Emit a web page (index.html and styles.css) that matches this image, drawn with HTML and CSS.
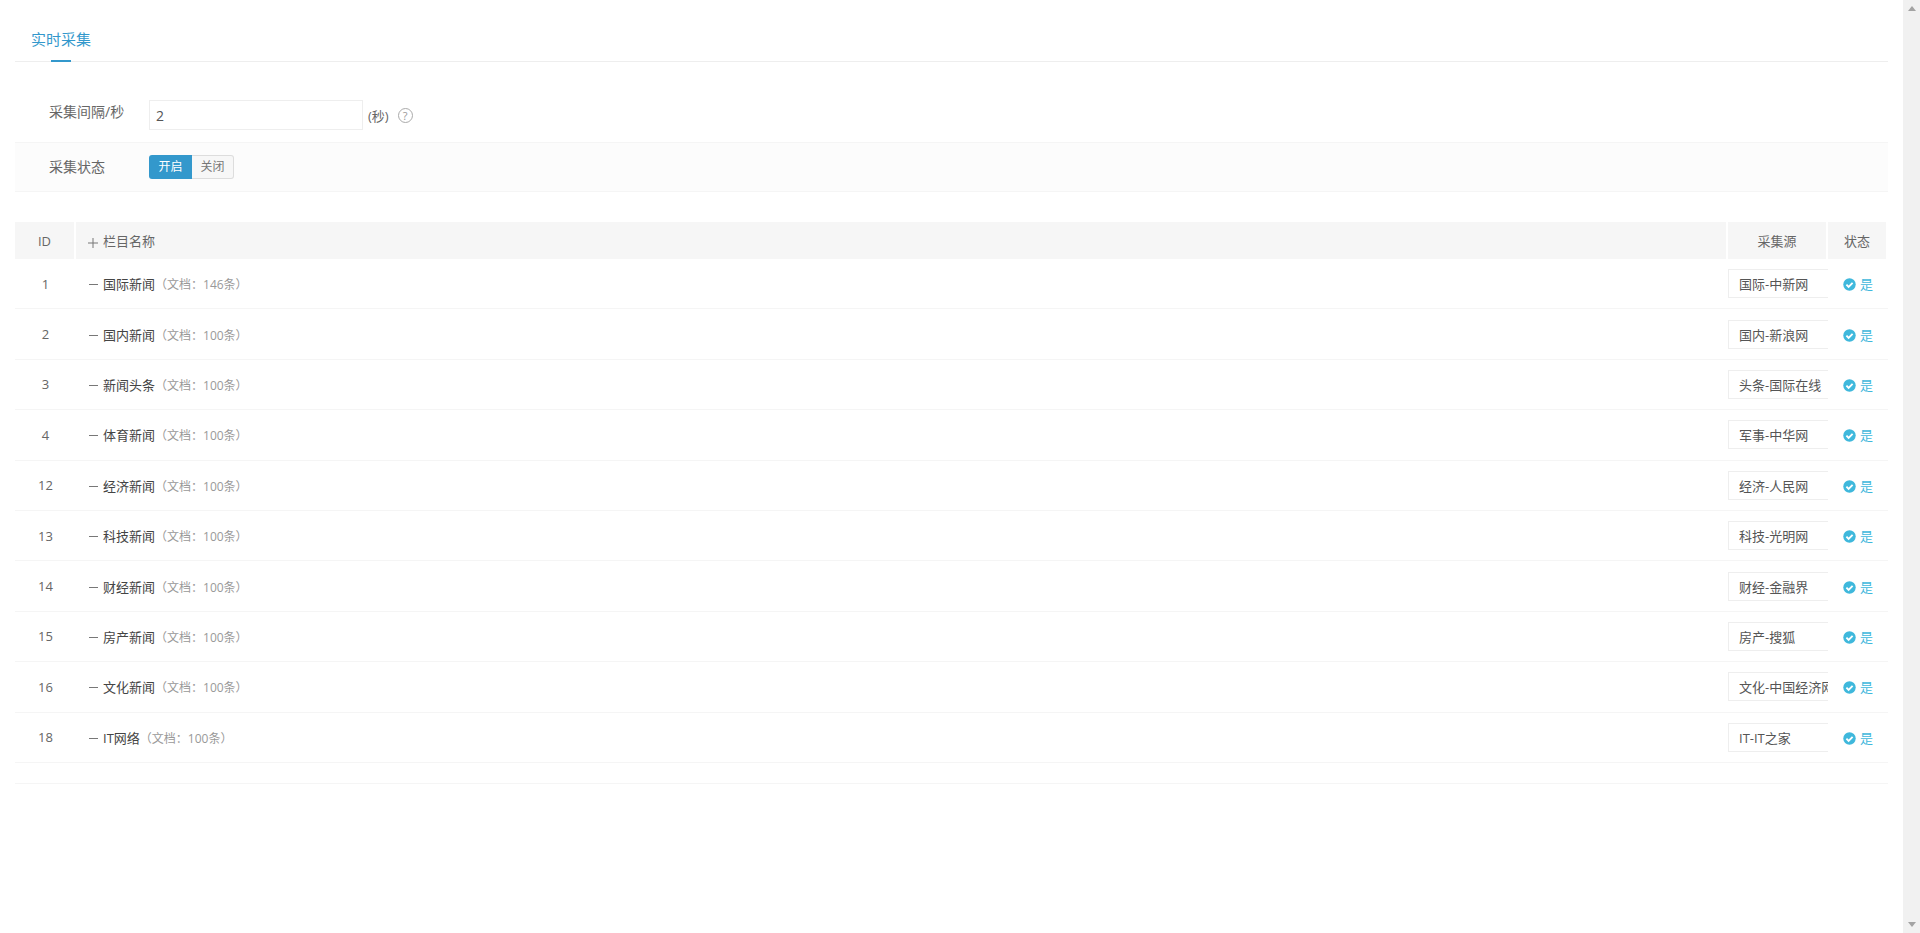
FILE: index.html
```html
<!DOCTYPE html>
<html lang="zh-CN">
<head>
    <meta charset="UTF-8">
    <meta name="viewport" content="width=device-width, initial-scale=1.0">
    <link rel="stylesheet" href="styles.css">
    <title>实时采集</title>
</head>
<body>
    <div class="page">
        <div class="main">
            <div class="tabs">
                <span class="tab">实时采集</span>
            </div>

            <div class="form">
                <div class="form-row">
                    <label class="form-label form-label-top" for="interval">采集间隔/秒</label>
                    <input class="text-input" type="text" id="interval" value="2">
                    <span class="unit">(秒)</span>
                    <span class="help">?</span>
                </div>
                <div class="form-row form-row-alt">
                    <span class="form-label">采集状态</span>
                    <div class="switch">
                        <span class="switch-on">开启</span>
                        <span class="switch-off">关闭</span>
                    </div>
                </div>
            </div>

            <table class="list">
                <colgroup>
                    <col class="col-id">
                    <col>
                    <col class="col-source">
                    <col class="col-status">
                </colgroup>
                <thead>
                    <tr>
                        <th>ID</th>
                        <th class="name-head">
                            <svg class="tree-icon" width="10" height="10" viewBox="0 0 10 10"><path d="M0 5h10M5 0v10" stroke="#777" stroke-width="1" fill="none"/></svg>栏目名称
                        </th>
                        <th>采集源</th>
                        <th>状态</th>
                    </tr>
                </thead>
                <tbody>
                    <tr>
                        <td class="id">1</td>
                        <td><span class="dash"></span><span class="name">国际新闻</span><span class="count">（文档：146条）</span></td>
                        <td class="source"><input class="source-input" type="text" value="国际-中新网"></td>
                        <td class="status"><svg class="check" width="13" height="13" viewBox="0 0 13 13"><circle cx="6.5" cy="6.5" r="6.2" fill="#3fb8dc"/><path d="M3.4 6.6l2.2 2.2 4-4" stroke="#fff" stroke-width="1.9" fill="none"/></svg>是</td>
                    </tr>
                    <tr>
                        <td class="id">2</td>
                        <td><span class="dash"></span><span class="name">国内新闻</span><span class="count">（文档：100条）</span></td>
                        <td class="source"><input class="source-input" type="text" value="国内-新浪网"></td>
                        <td class="status"><svg class="check" width="13" height="13" viewBox="0 0 13 13"><circle cx="6.5" cy="6.5" r="6.2" fill="#3fb8dc"/><path d="M3.4 6.6l2.2 2.2 4-4" stroke="#fff" stroke-width="1.9" fill="none"/></svg>是</td>
                    </tr>
                    <tr>
                        <td class="id">3</td>
                        <td><span class="dash"></span><span class="name">新闻头条</span><span class="count">（文档：100条）</span></td>
                        <td class="source"><input class="source-input" type="text" value="头条-国际在线"></td>
                        <td class="status"><svg class="check" width="13" height="13" viewBox="0 0 13 13"><circle cx="6.5" cy="6.5" r="6.2" fill="#3fb8dc"/><path d="M3.4 6.6l2.2 2.2 4-4" stroke="#fff" stroke-width="1.9" fill="none"/></svg>是</td>
                    </tr>
                    <tr>
                        <td class="id">4</td>
                        <td><span class="dash"></span><span class="name">体育新闻</span><span class="count">（文档：100条）</span></td>
                        <td class="source"><input class="source-input" type="text" value="军事-中华网"></td>
                        <td class="status"><svg class="check" width="13" height="13" viewBox="0 0 13 13"><circle cx="6.5" cy="6.5" r="6.2" fill="#3fb8dc"/><path d="M3.4 6.6l2.2 2.2 4-4" stroke="#fff" stroke-width="1.9" fill="none"/></svg>是</td>
                    </tr>
                    <tr>
                        <td class="id">12</td>
                        <td><span class="dash"></span><span class="name">经济新闻</span><span class="count">（文档：100条）</span></td>
                        <td class="source"><input class="source-input" type="text" value="经济-人民网"></td>
                        <td class="status"><svg class="check" width="13" height="13" viewBox="0 0 13 13"><circle cx="6.5" cy="6.5" r="6.2" fill="#3fb8dc"/><path d="M3.4 6.6l2.2 2.2 4-4" stroke="#fff" stroke-width="1.9" fill="none"/></svg>是</td>
                    </tr>
                    <tr>
                        <td class="id">13</td>
                        <td><span class="dash"></span><span class="name">科技新闻</span><span class="count">（文档：100条）</span></td>
                        <td class="source"><input class="source-input" type="text" value="科技-光明网"></td>
                        <td class="status"><svg class="check" width="13" height="13" viewBox="0 0 13 13"><circle cx="6.5" cy="6.5" r="6.2" fill="#3fb8dc"/><path d="M3.4 6.6l2.2 2.2 4-4" stroke="#fff" stroke-width="1.9" fill="none"/></svg>是</td>
                    </tr>
                    <tr>
                        <td class="id">14</td>
                        <td><span class="dash"></span><span class="name">财经新闻</span><span class="count">（文档：100条）</span></td>
                        <td class="source"><input class="source-input" type="text" value="财经-金融界"></td>
                        <td class="status"><svg class="check" width="13" height="13" viewBox="0 0 13 13"><circle cx="6.5" cy="6.5" r="6.2" fill="#3fb8dc"/><path d="M3.4 6.6l2.2 2.2 4-4" stroke="#fff" stroke-width="1.9" fill="none"/></svg>是</td>
                    </tr>
                    <tr>
                        <td class="id">15</td>
                        <td><span class="dash"></span><span class="name">房产新闻</span><span class="count">（文档：100条）</span></td>
                        <td class="source"><input class="source-input" type="text" value="房产-搜狐"></td>
                        <td class="status"><svg class="check" width="13" height="13" viewBox="0 0 13 13"><circle cx="6.5" cy="6.5" r="6.2" fill="#3fb8dc"/><path d="M3.4 6.6l2.2 2.2 4-4" stroke="#fff" stroke-width="1.9" fill="none"/></svg>是</td>
                    </tr>
                    <tr>
                        <td class="id">16</td>
                        <td><span class="dash"></span><span class="name">文化新闻</span><span class="count">（文档：100条）</span></td>
                        <td class="source"><input class="source-input" type="text" value="文化-中国经济网"></td>
                        <td class="status"><svg class="check" width="13" height="13" viewBox="0 0 13 13"><circle cx="6.5" cy="6.5" r="6.2" fill="#3fb8dc"/><path d="M3.4 6.6l2.2 2.2 4-4" stroke="#fff" stroke-width="1.9" fill="none"/></svg>是</td>
                    </tr>
                    <tr>
                        <td class="id">18</td>
                        <td><span class="dash"></span><span class="name">IT网络</span><span class="count">（文档：100条）</span></td>
                        <td class="source"><input class="source-input" type="text" value="IT-IT之家"></td>
                        <td class="status"><svg class="check" width="13" height="13" viewBox="0 0 13 13"><circle cx="6.5" cy="6.5" r="6.2" fill="#3fb8dc"/><path d="M3.4 6.6l2.2 2.2 4-4" stroke="#fff" stroke-width="1.9" fill="none"/></svg>是</td>
                    </tr>
                    <tr class="foot-row">
                        <td colspan="4"></td>
                    </tr>
                </tbody>
            </table>
        </div>

        <div class="scrollbar">
            <span class="arrow-up"></span>
            <span class="arrow-down"></span>
        </div>
    </div>
</body>
</html>
```

FILE: styles.css
```css
html, body {
    height: 100%;
}

body {
    margin: 0;
    background-color: #fff;
    color: #555;
    font-family: 'Open Sans', 'Noto Sans CJK SC', sans-serif;
    font-size: 13px;
    overflow: hidden;
}

.page {
    display: flex;
    height: 100%;
}

.main {
    flex: 1;
    padding: 0 15px;
}

.scrollbar {
    width: 17px;
    background-color: #f1f1f1;
    display: flex;
    flex-direction: column;
    justify-content: space-between;
    align-items: center;
    padding: 6px 0;
    box-sizing: border-box;
}

.arrow-up,
.arrow-down {
    width: 0;
    height: 0;
    border-left: 4px solid transparent;
    border-right: 4px solid transparent;
}

.arrow-up {
    border-bottom: 5px solid #a3a3a3;
}

.arrow-down {
    border-top: 5px solid #a3a3a3;
}

.tabs {
    height: 61px;
    border-bottom: 1px solid #eee;
}

.tab {
    position: relative;
    display: inline-block;
    height: 61px;
    line-height: 79px;
    margin-left: 16px;
    color: #3398cc;
    font-size: 15px;
}

.tab::after {
    content: "";
    position: absolute;
    left: 20px;
    bottom: -1px;
    width: 20px;
    height: 2px;
    background-color: #3398cc;
}

.form {
    margin-top: 26px;
}

.form-row {
    display: flex;
    align-items: center;
    padding: 12px 0;
    border-bottom: 1px solid #f5f5f5;
}

.form-row-alt {
    background-color: #fcfcfc;
}

.form-label {
    width: 100px;
    padding-left: 34px;
    font-size: 14px;
    color: #666;
    line-height: 20px;
}

.form-label-top {
    margin-bottom: 6px;
}

.text-input {
    width: 214px;
    height: 30px;
    box-sizing: border-box;
    border: 1px solid #eee;
    padding: 0 6px;
    font-family: inherit;
    font-size: 14px;
    color: #555;
    outline: none;
}

.unit {
    margin-left: 5px;
    color: #666;
}

.help {
    width: 13px;
    height: 13px;
    line-height: 13px;
    margin-left: 9px;
    border: 1px solid #aaa;
    border-radius: 50%;
    text-align: center;
    font-size: 11px;
    color: #999;
}

.switch {
    display: flex;
    height: 24px;
    line-height: 24px;
    font-size: 12px;
}

.switch-on {
    width: 43px;
    background-color: #3398cc;
    border-radius: 3px 0 0 3px;
    color: #fff;
    text-align: center;
}

.switch-off {
    width: 42px;
    box-sizing: border-box;
    line-height: 22px;
    background-color: #f7f7f7;
    border: 1px solid #ddd;
    border-left: none;
    border-radius: 0 3px 3px 0;
    color: #777;
    text-align: center;
}

.list {
    width: 100%;
    margin-top: 30px;
    table-layout: fixed;
    border-collapse: separate;
    border-spacing: 0;
}

.col-id {
    width: 61px;
}

.col-source {
    width: 100px;
}

.col-status {
    width: 60px;
}

.list th {
    height: 37px;
    padding: 0;
    box-sizing: border-box;
    background-color: #f6f6f6;
    background-clip: padding-box;
    border-right: 2px solid #fff;
    font-weight: normal;
    color: #666;
}

.list .name-head {
    text-align: left;
    padding-left: 12px;
}

.tree-icon {
    margin: 0 5px 0 0;
    vertical-align: -2px;
}

.list td {
    height: 50.4px;
    padding: 0;
    box-sizing: border-box;
    border-bottom: 1px solid #f5f5f5;
}

.list .foot-row td {
    height: 20.6px;
}

.id {
    text-align: center;
    color: #666;
}

.dash {
    display: inline-block;
    width: 9px;
    height: 1px;
    margin: 0 5px 0 13px;
    background-color: #777;
    vertical-align: 4px;
}

.name {
    color: #444;
}

.count {
    font-size: 12px;
    color: #999;
}

.source {
    overflow: hidden;
}

.source-input {
    display: block;
    width: 130px;
    height: 29px;
    box-sizing: border-box;
    border: 1px solid #eee;
    padding: 0 10px;
    font-family: inherit;
    font-size: 13px;
    color: #555;
    outline: none;
}

.status {
    text-align: center;
    color: #3fb8dc;
}

.check {
    margin-right: 4px;
    vertical-align: -2px;
}
```
